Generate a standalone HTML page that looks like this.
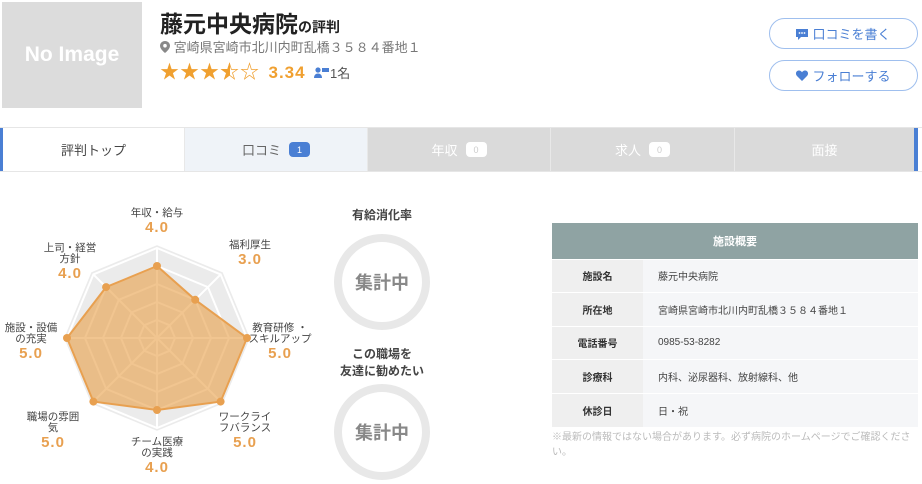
<!DOCTYPE html>
<html><head><meta charset="utf-8">
<style>
*{margin:0;padding:0;box-sizing:border-box}
body{width:922px;height:484px;background:#fff;font-family:"Liberation Sans","Noto Sans CJK JP",sans-serif;color:#333;position:relative;overflow:hidden}
.abs{position:absolute}
.noimg{left:2px;top:2px;width:140px;height:106px;background:#dcdcdc;color:#fff;font-weight:bold;font-size:21px;display:flex;align-items:center;justify-content:center}
.addr{left:160px;top:37px;font-size:13px;color:#777;white-space:nowrap}
.rate{left:160px;top:57px;white-space:nowrap;font-size:16px}
.btn{left:769px;width:149px;height:31px;border:1.5px solid #9fbfee;border-radius:16px;color:#4a7fd4;font-size:13px;display:flex;align-items:center;justify-content:center;gap:4px}
.tabs{left:0;top:127px;width:922px;height:45px;display:flex;border-top:1px solid #e6e6e6;border-bottom:1px solid #e6e6e6}
.tab{height:100%;display:flex;align-items:center;justify-content:center;font-size:13px;gap:8px;background:#dadada;color:#fff;border-right:1px solid #e8e8e8}
.badge{background:#fff;color:#ccc;font-size:9px;border-radius:4px;width:21px;height:15px;display:flex;align-items:center;justify-content:center}
.lbl{font-size:10.5px;color:#444;text-align:center;line-height:11px;white-space:nowrap}
.val{font-size:15px;color:#e8a050;font-weight:bold;text-align:center;letter-spacing:1px}
.ring{width:96px;height:96px;border:8px solid #e8e8e8;border-radius:50%;display:flex;align-items:center;justify-content:center;font-size:18px;font-weight:bold;color:#888}
table{border-collapse:collapse;left:552px;top:223px;width:366px;font-size:10px}
th{background:#8fa3a3;color:#fff;height:36px;font-size:11px}
td{height:33.5px;border-top:1px solid #fff}
td.k{background:#efefef;width:91px;text-align:center;font-weight:bold;color:#333}
td.v{background:#f5f6f8;padding-left:15px;color:#444}
</style></head><body>
<div class="abs noimg">No Image</div>
<div class="abs" style="left:160px;top:5px;font-size:23px;font-weight:bold;color:#222;white-space:nowrap">藤元中央病院<span style="font-size:14px">の評判</span></div>
<div class="abs addr"><svg width="10" height="12" viewBox="0 0 10 12" style="vertical-align:-1px"><path d="M5 0C2.2 0 0 2.2 0 4.8 0 8.3 5 12 5 12s5-3.7 5-7.2C10 2.2 7.8 0 5 0z" fill="#888"/><circle cx="5" cy="4.7" r="1.8" fill="#fff"/></svg> 宮崎県宮崎市北川内町乱橋３５８４番地１</div>
<div class="abs rate"><span style="color:#f0a030;font-size:19px;letter-spacing:1px">★★★<span style="position:relative;display:inline-block"><span style="color:#f0a030">☆</span><span style="position:absolute;left:0;top:0;width:50%;overflow:hidden">★</span></span>☆</span> <span style="color:#f0a030;font-weight:bold;font-size:17px;margin-left:4px;letter-spacing:1px">3.34</span> <span style="font-size:13px;color:#555;margin-left:4px"><svg width="16" height="11" viewBox="0 0 16 11"><circle cx="4" cy="3" r="2.6" fill="#4a7fd4"/><path d="M0 11c0-3 1.8-4.5 4-4.5S8 8 8 11z" fill="#4a7fd4"/><rect x="8" y="1" width="7" height="4" fill="#4a7fd4"/></svg>1名</span></div>
<div class="abs btn" style="top:18px"><svg width="12" height="12" viewBox="0 0 12 12"><path d="M0 1h12v8H5l-3 3V9H0z" fill="#4a7fd4"/><circle cx="3.5" cy="5" r="0.9" fill="#fff"/><circle cx="6" cy="5" r="0.9" fill="#fff"/><circle cx="8.5" cy="5" r="0.9" fill="#fff"/></svg>口コミを書く</div>
<div class="abs btn" style="top:60px"><svg width="12" height="11" viewBox="0 0 12 11"><path d="M6 11L1 6C-1 4 0 0.5 3 0.5 4.5 0.5 5.5 1.5 6 2.3 6.5 1.5 7.5 0.5 9 0.5 12 0.5 13 4 11 6z" fill="#4a7fd4"/></svg>フォローする</div>
<div class="abs tabs">
<div class="tab" style="width:185px;background:#fff;color:#444;border-left:3px solid #4a7fd4">評判トップ</div>
<div class="tab" style="width:183px;background:#eff3f8;color:#666">口コミ <span class="badge" style="background:#4a7fd4;color:#fff">1</span></div>
<div class="tab" style="width:183px">年収 <span class="badge">0</span></div>
<div class="tab" style="width:184px">求人 <span class="badge">0</span></div>
<div class="tab" style="width:183px;border-right:4px solid #4a7fd4">面接</div>
</div>
<svg class="abs" style="left:0;top:0" width="340" height="484">
<polygon points="157,243 224.2,270.8 252,338 224.2,405.2 157,433 89.8,405.2 62,338 89.8,270.8" fill="#ebebeb" stroke="#fff" stroke-width="4"/>
<g fill="none" stroke="#fff" stroke-width="2">
<polygon points="157,248 220.6,274.4 247,338 220.6,401.6 157,428 93.4,401.6 67,338 93.4,274.4"/>
<polygon points="157,266 207.9,287.1 229,338 207.9,388.9 157,410 106.1,388.9 85,338 106.1,287.1"/>
<polygon points="157,284 195.2,299.8 211,338 195.2,376.2 157,392 118.8,376.2 103,338 118.8,299.8"/>
<polygon points="157,302 182.5,312.5 193,338 182.5,363.5 157,374 131.5,363.5 121,338 131.5,312.5"/>
<polygon points="157,320 169.7,325.3 175,338 169.7,350.7 157,356 144.3,350.7 139,338 144.3,325.3"/>
<path d="M157,248V428M67,338H247M93.4,274.4L220.6,401.6M220.6,274.4L93.4,401.6"/>
</g>
<polygon points="157,266 195.2,299.8 247,338 220.6,401.6 157,410 93.4,401.6 67,338 106.1,287.1" fill="rgba(232,158,70,0.6)" stroke="#e8a050" stroke-width="2"/>
<g fill="#e8a050"><circle cx="157" cy="266" r="4"/><circle cx="195.2" cy="299.8" r="4"/><circle cx="247" cy="338" r="4"/><circle cx="220.6" cy="401.6" r="4"/><circle cx="157" cy="410" r="4"/><circle cx="93.4" cy="401.6" r="4"/><circle cx="67" cy="338" r="4"/><circle cx="106.1" cy="287.1" r="4"/></g>
</svg>
<div class="abs" style="left:117px;top:208px;width:80px"><div class="lbl">年収・給与</div><div class="val">4.0</div></div>
<div class="abs" style="left:210px;top:240px;width:80px"><div class="lbl">福利厚生</div><div class="val">3.0</div></div>
<div class="abs" style="left:240px;top:323px;width:80px"><div class="lbl">教育研修 ・<br>スキルアップ</div><div class="val">5.0</div></div>
<div class="abs" style="left:205px;top:412px;width:80px"><div class="lbl">ワークライ<br>フバランス</div><div class="val">5.0</div></div>
<div class="abs" style="left:117px;top:437px;width:80px"><div class="lbl">チーム医療<br>の実践</div><div class="val">4.0</div></div>
<div class="abs" style="left:20px;top:412px;width:66px"><div class="lbl">職場の雰囲<br>気</div><div class="val">5.0</div></div>
<div class="abs" style="left:0;top:323px;width:62px"><div class="lbl">施設・設備<br>の充実</div><div class="val">5.0</div></div>
<div class="abs" style="left:30px;top:243px;width:80px"><div class="lbl">上司・経営<br>方針</div><div class="val">4.0</div></div>
<div class="abs" style="left:332px;top:206px;width:100px;text-align:center;font-size:12px;font-weight:bold;color:#444">有給消化率</div>
<div class="abs ring" style="left:334px;top:234px">集計中</div>
<div class="abs" style="left:332px;top:346px;width:100px;text-align:center;font-size:12px;font-weight:bold;color:#444;line-height:17px">この職場を<br>友達に勧めたい</div>
<div class="abs ring" style="left:334px;top:384px">集計中</div>
<table class="abs">
<tr><th colspan="2">施設概要</th></tr>
<tr><td class="k">施設名</td><td class="v">藤元中央病院</td></tr>
<tr><td class="k">所在地</td><td class="v">宮崎県宮崎市北川内町乱橋３５８４番地１</td></tr>
<tr><td class="k">電話番号</td><td class="v">0985-53-8282</td></tr>
<tr><td class="k">診療科</td><td class="v">内科、泌尿器科、放射線科、他</td></tr>
<tr><td class="k">休診日</td><td class="v">日・祝</td></tr>
</table>
<div class="abs" style="left:552px;top:430px;width:366px;font-size:10px;color:#bbb;line-height:15px">※最新の情報ではない場合があります。必ず病院のホームページでご確認ください。</div>
</body></html>
